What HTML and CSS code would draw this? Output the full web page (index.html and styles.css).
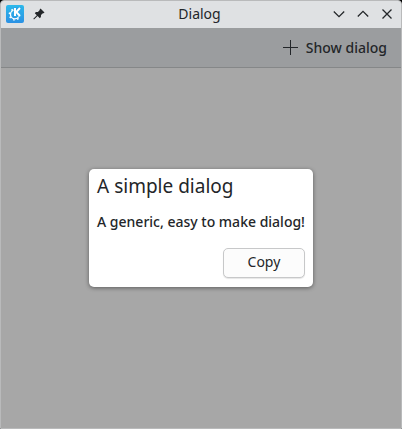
FILE: index.html
```
<!DOCTYPE html>
<html lang="en">
<head>
<meta charset="utf-8">
<meta name="viewport" content="width=device-width, initial-scale=1">
<title>Dialog</title>
<link rel="stylesheet" href="styles.css">
</head>
<body>
<div class="window">
  <header class="titlebar">
    <div class="titlebar-side">
      <svg class="app-icon" viewBox="0 0 18 18" aria-hidden="true">
        <defs><linearGradient id="blue" x1="0" y1="0" x2="0" y2="1"><stop offset="0" stop-color="#2cb9ea"/><stop offset="1" stop-color="#2b91e4"/></linearGradient></defs>
        <rect width="18" height="18" rx="2" fill="url(#blue)"/>
        <circle cx="8.8" cy="9.5" r="4.3" fill="none" stroke="#fff" stroke-width="1.3"/>
        <circle cx="8.8" cy="9.5" r="5.4" fill="none" stroke="#fff" stroke-width="1.5" stroke-dasharray="1.6 2.64"/>
        <path d="M7.500 2h8v9.500h-8z" fill="#2ca7e8"/>
        <path d="M9 3v8M14 3L10.300 7L14 11" fill="none" stroke="#fff" stroke-width="2"/>
      </svg>
      <button class="icon-button" type="button" aria-label="Pin window">
        <svg class="pin" viewBox="0 0 12 12" aria-hidden="true"><path d="M7.5.5l4 4-1 .8-.6-.1L8 7.1l-.1 2-1.1 1.1-2.2-2.2L1 11.5l-.7-.7L3.8 7.2 1.8 5.2l1.1-1.1 2-.1 1.9-1.9-.1-.6z" fill="#232629"/></svg>
      </button>
    </div>
    <h1 class="window-title">Dialog</h1>
    <div class="titlebar-side controls">
      <button class="icon-button" type="button" aria-label="Minimize"><svg class="glyph" viewBox="0 0 12 12" aria-hidden="true"><path d="M.8 3.5L6 8.7l5.2-5.2"/></svg></button>
      <button class="icon-button" type="button" aria-label="Maximize"><svg class="glyph" viewBox="0 0 12 12" aria-hidden="true"><path d="M.8 8.5L6 3.3l5.2 5.2"/></svg></button>
      <button class="icon-button" type="button" aria-label="Close"><svg class="glyph" viewBox="0 0 12 12" aria-hidden="true"><path d="M1.5 1.5l9 9M10.5 1.5l-9 9"/></svg></button>
    </div>
  </header>
  <div class="toolbar">
    <button class="show-button" type="button">
      <svg class="plus" viewBox="0 0 16 16" aria-hidden="true"><path d="M7.5 0v15M0 7.5h15"/></svg>
      Show dialog
    </button>
  </div>
  <main class="content">
    <section class="dialog" role="dialog" aria-labelledby="dialog-title">
      <h2 class="dialog-title" id="dialog-title">A simple dialog</h2>
      <p class="dialog-text">A generic, easy to make dialog!</p>
      <button class="copy-button" type="button">Copy</button>
    </section>
  </main>
</div>
</body>
</html>
```
FILE: styles.css
```
* {
  box-sizing: border-box;
}

body {
  margin: 0;
  background: #000;
  color: #232629;
  font: 500 14px/20px "Noto Sans", sans-serif;
}

button {
  padding: 0;
  border: 0;
  background: none;
  color: inherit;
  font: inherit;
}

svg {
  display: block;
}

.window {
  display: flex;
  flex-direction: column;
  min-height: 100vh;
  overflow: hidden;
  border: 1px solid #b9babb;
  border-radius: 4px 4px 0 0;
  background: #a7a7a7;
}

.titlebar {
  display: grid;
  grid-template-columns: 1fr auto 1fr;
  align-items: center;
  height: 27px;
  padding: 0 8px 2px 5px;
  background: #dfe1e3;
}

.titlebar-side {
  display: flex;
  align-items: center;
  gap: 9px;
}

.controls {
  justify-content: flex-end;
  gap: 12px;
}

.app-icon {
  width: 18px;
  height: 18px;
}

.pin,
.glyph {
  width: 12px;
  height: 12px;
}

.glyph,
.plus {
  fill: none;
  stroke: #232629;
}

.glyph {
  stroke-width: 1.3;
}

.window-title {
  margin: 0;
  font-size: 14px;
  font-weight: 450;
  line-height: 24px;
}

.toolbar {
  display: flex;
  justify-content: flex-end;
  align-items: center;
  height: 40px;
  padding: 0 14px;
  border-bottom: 1px solid #858788;
  background: #9b9d9f;
}

.show-button {
  display: flex;
  align-items: center;
  gap: 7px;
}

.plus {
  width: 16px;
  height: 16px;
}

.content {
  display: flex;
  flex: 1;
  align-items: center;
  justify-content: center;
  padding-bottom: 40px;
}

.dialog {
  display: flex;
  flex-direction: column;
  padding: 7px 8px 9px;
  border-radius: 5px;
  background: #fff;
  box-shadow: 0 1px 4px rgb(0 0 0 / 45%);
}

.dialog-title {
  margin: 0 0 16px;
  font-size: 19px;
  font-weight: 450;
  line-height: 20px;
}

.dialog-text {
  margin: 0 0 16px;
}

.copy-button {
  align-self: flex-end;
  width: 82px;
  height: 30px;
  padding-bottom: 2px;
  border: 1px solid #c7c8c9;
  border-radius: 5px;
  background: #fcfcfc;
  box-shadow: 0 1px 1px rgb(0 0 0 / 10%);
  font-weight: 450;
}
```
